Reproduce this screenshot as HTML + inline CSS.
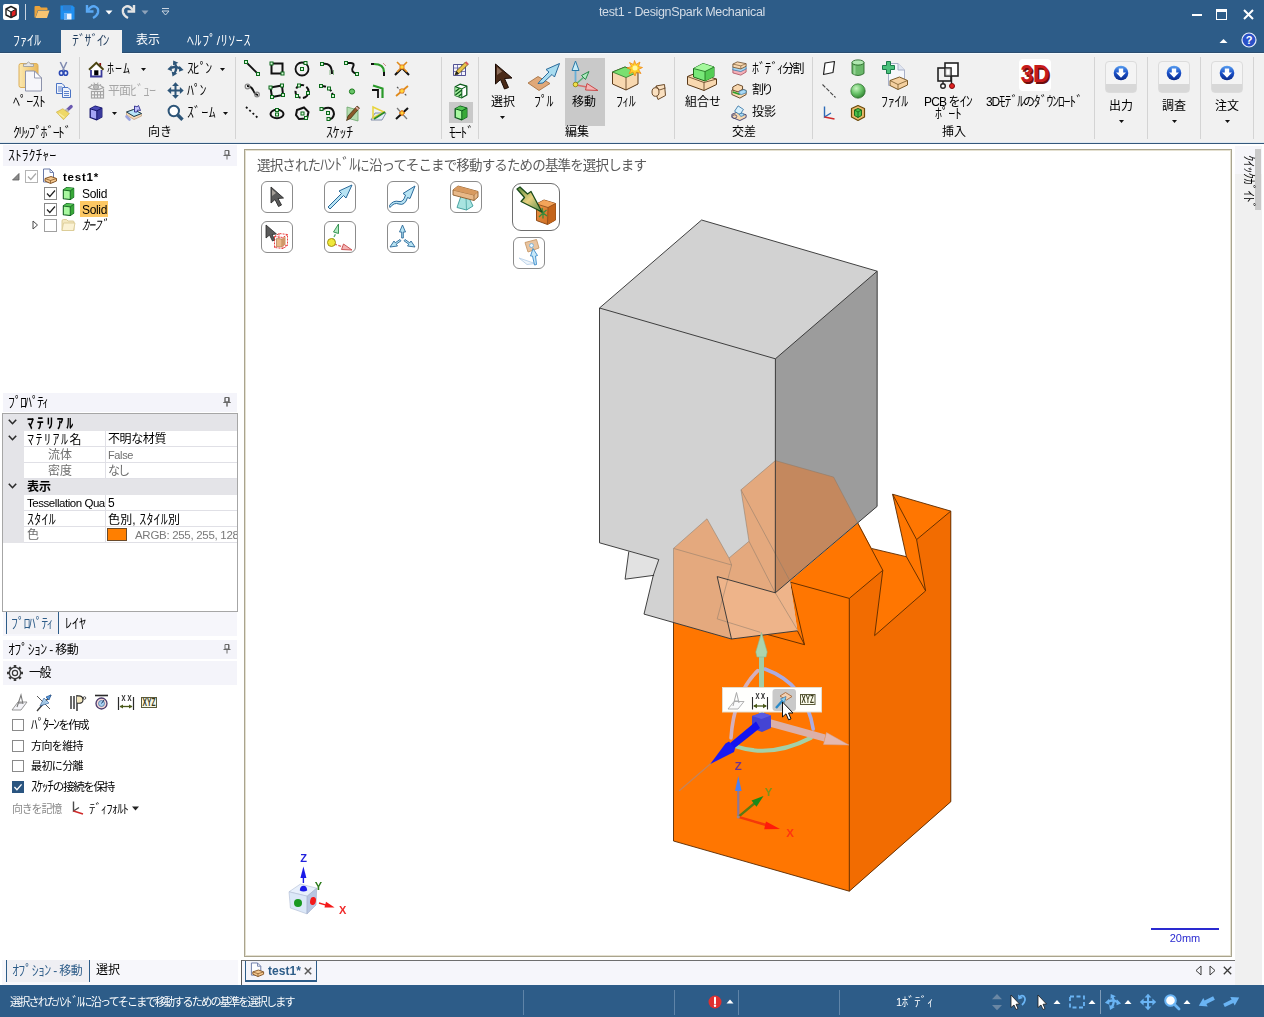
<!DOCTYPE html>
<html lang="ja">
<head>
<meta charset="utf-8">
<title>test1 - DesignSpark Mechanical</title>
<style>
*{box-sizing:border-box;margin:0;padding:0}
html,body{width:1264px;height:1017px;overflow:hidden;background:#f0f0f0}
body{position:relative;font-family:"Liberation Sans","Noto Sans CJK JP",sans-serif;font-size:12px;color:#000;line-height:1}
.a{position:absolute}
.t{position:absolute;white-space:nowrap;line-height:14px;font-size:12px;will-change:transform}
svg{position:absolute;overflow:visible}
.k{font-size:1.167em;font-weight:350}
[style*="font-weight:bold"] .k{font-weight:bold}
#titlebar{left:0;top:0;width:1264px;height:53px;background:#2d5c88}
#ribbon{left:0;top:53px;width:1264px;height:90px;background:#f1f1f1}
#ribline{left:0;top:142px;width:1264px;height:2px;background:linear-gradient(#dfe8f0 0,#dfe8f0 50%,#34587c 50%,#34587c 100%)}
.sep{position:absolute;top:57px;width:1px;height:82px;background:#d4d4d4}
.gl{position:absolute;top:125px;font-size:12px;line-height:14px;white-space:nowrap;will-change:transform}
.hdr{position:absolute;left:3px;width:234px;height:20px;background:#f4f4fa}
.cb{position:absolute;width:13px;height:13px;border:1px solid #8a8a8a;background:#fff}
.vbtn{position:absolute;width:32px;height:32px;border:1px solid #8c8c8c;border-radius:6px;background:#fff}
</style>
</head>
<body>
<!-- TITLE BAR -->
<div id="titlebar" class="a"></div>
<div class="t" style="letter-spacing:-0.35px;left:599px;top:5px;color:#d3dce6;font-size:12.5px">test1 - DesignSpark Mechanical</div>
<!-- title icons -->
<div class="a" style="left:3px;top:4px;width:16px;height:16px;background:#fff;border-radius:2px"></div>
<svg style="left:3px;top:4px;width:16px;height:16px" viewBox="0 0 16 16"><path d="M8 2.5 L13 5 L13 11 L8 13.5 L3 11 L3 5 Z" fill="#fff" stroke="#222" stroke-width="1.4" stroke-linejoin="round"/><path d="M8 8 L13 5 L13 11 L8 13.5 Z" fill="#e02020" stroke="#222" stroke-width="1"/><path d="M3 5 L8 8 L8 13.5" fill="none" stroke="#222" stroke-width="1.2"/></svg>
<div class="a" style="left:25px;top:4px;width:1px;height:16px;background:#c9d4e0"></div>
<svg style="left:34px;top:5px;width:16px;height:14px" viewBox="0 0 16 14"><path d="M0.5 2 Q0.5 1 1.5 1 L5.5 1 L7 2.5 L12.5 2.5 Q13.5 2.5 13.5 3.5 L13.5 5 L4 5 L1.5 12.5 L0.5 12.5 Z" fill="#e9a23b"/><path d="M4.2 5.5 L15.5 5.5 L13 13 L1.5 13 Z" fill="#f8c471"/></svg>
<svg style="left:60px;top:5px;width:15px;height:15px" viewBox="0 0 15 15"><path d="M0.5 0.5 L12.5 0.5 L14.5 2.5 L14.5 14.5 L0.5 14.5 Z" fill="#1f8ff0"/><rect x="3" y="0.5" width="8" height="5" fill="#2f7fd0"/><rect x="4" y="8.5" width="7.5" height="6" fill="#eaf3ff"/><rect x="4" y="8.5" width="3" height="6" fill="#6ab0f5"/></svg>
<svg style="left:85px;top:4px;width:16px;height:15px" viewBox="0 0 16 15"><path d="M2 1 L2 7.5 L8.5 7.5" fill="none" stroke="#5aa9f5" stroke-width="2.4" stroke-linejoin="miter"/><path d="M3 6.5 Q6 1.5 10 2.5 Q14 4 13 8.5 Q12 12 8 14" fill="none" stroke="#5aa9f5" stroke-width="2.4"/></svg>
<svg style="left:105px;top:10px;width:8px;height:5px" viewBox="0 0 8 5"><path d="M0.5 0.5 L7.5 0.5 L4 4.5 Z" fill="#fff"/></svg>
<svg style="left:120px;top:4px;width:16px;height:15px" viewBox="0 0 16 15"><path d="M14 1 L14 7.5 L7.5 7.5" fill="none" stroke="#e4e4e4" stroke-width="2.4"/><path d="M13 6.5 Q10 1.5 6 2.5 Q2 4 3 8.5 Q4 12 8 14" fill="none" stroke="#e4e4e4" stroke-width="2.4"/></svg>
<svg style="left:141px;top:10px;width:8px;height:5px" viewBox="0 0 8 5"><path d="M0.5 0.5 L7.5 0.5 L4 4.5 Z" fill="#8fa3ba"/></svg>
<svg style="left:161px;top:7px;width:9px;height:9px" viewBox="0 0 9 9"><path d="M1 1.5 L8 1.5" stroke="#c9d4e0" stroke-width="1"/><path d="M1 4 L8 4 L4.5 8 Z" fill="none" stroke="#c9d4e0" stroke-width="1"/></svg>
<!-- window controls -->
<div class="a" style="left:1192px;top:14px;width:10px;height:2px;background:#fff"></div>
<div class="a" style="left:1216px;top:9px;width:11px;height:11px;border:1px solid #fff;border-top-width:3px"></div>
<svg style="left:1243px;top:9px;width:11px;height:11px" viewBox="0 0 11 11"><path d="M1 1 L10 10 M10 1 L1 10" stroke="#fff" stroke-width="2"/></svg>
<svg style="left:1219px;top:38px;width:9px;height:6px" viewBox="0 0 9 6"><path d="M0.5 5 L4.5 1 L8.5 5 Z" fill="#fff"/></svg>
<svg style="left:1241px;top:32px;width:16px;height:16px" viewBox="0 0 16 16"><circle cx="8" cy="8" r="7" fill="#2a50c8" stroke="#e8eefc" stroke-width="1.2"/><text x="8" y="12" font-family="Liberation Sans" font-weight="bold" font-size="11" fill="#fff" text-anchor="middle">?</text></svg>
<!-- TABS -->
<div class="a" style="left:61px;top:30px;width:61px;height:23px;background:#f1f1f1"></div>
<div class="t" style="letter-spacing:-0.00px;left:13px;top:33px;color:#fff"><span class="k">ﾌｧｲﾙ</span></div>
<div class="t" style="letter-spacing:-1.50px;left:72px;top:33px;color:#1e3a5a"><span class="k">ﾃﾞｻﾞｲﾝ</span></div>
<div class="t" style="left:136px;top:33px;color:#fff">表示</div>
<div class="t" style="letter-spacing:0.58px;left:187px;top:33px;color:#fff"><span class="k">ﾍﾙﾌﾟ</span>/<span class="k">ﾘｿｰｽ</span></div>
<!-- RIBBON -->
<div id="ribbon" class="a"></div>
<div class="a" style="left:0;top:52px;width:1264px;height:1px;background:#2b4d70"></div>
<div class="a" style="left:0;top:53px;width:1264px;height:1px;background:#f4fbff"></div>
<div class="a" style="left:61px;top:52px;width:61px;height:2px;background:#f1f1f1"></div>
<div id="ribline" class="a"></div>
<!-- ===== clipboard group ===== -->
<svg style="left:17px;top:59px;width:28px;height:34px" viewBox="0 0 28 34">
<defs><linearGradient id="pg" x1="0" y1="0" x2="1" y2="0"><stop offset="0" stop-color="#fbe8b0"/><stop offset="0.45" stop-color="#f5d488"/><stop offset="1" stop-color="#e9b85a"/></linearGradient></defs>
<rect x="2" y="4.500" width="19" height="24" rx="2" fill="url(#pg)" stroke="#dcae58" stroke-width="1"/>
<path d="M6.500 7.500 L6.500 5 L9.500 5 Q11.500 1 13.500 5 L16.500 5 L16.500 7.500 Z" fill="#e6e6e6" stroke="#a0a0a0" stroke-width="0.900"/>
<path d="M8.500 12 L17.500 12 L24.500 19 L24.500 32 L8.500 32 Z" fill="#f6f6fa" stroke="#8d93ab" stroke-width="1"/>
<path d="M17.500 12 L17.500 19 L24.500 19 Z" fill="#fdfdff" stroke="#8d93ab" stroke-width="0.900"/>
</svg>
<div class="t" style="letter-spacing:-0.75px;left:13px;top:94px"><span class="k">ﾍﾟｰｽﾄ</span></div>
<svg style="left:57px;top:61px;width:13px;height:16px" viewBox="0 0 13 16"><path d="M3.300 1 L7.800 10.500 M9.700 1 L5.200 10.500" stroke="#7f8ab0" stroke-width="1.500"/><ellipse cx="4.300" cy="12" rx="1.900" ry="2.300" fill="#e8ecfa" stroke="#2a48b4" stroke-width="1.600"/><ellipse cx="8.700" cy="12" rx="1.900" ry="2.300" fill="#e8ecfa" stroke="#2a48b4" stroke-width="1.600"/></svg>
<svg style="left:56px;top:83px;width:16px;height:15px" viewBox="0 0 16 15"><path d="M0.5 0.5 L6 0.5 L8.5 3 L8.5 10.5 L0.5 10.5 Z" fill="#eef3fc" stroke="#4c74c4" stroke-width="1"/><path d="M6.5 4.5 L12 4.5 L14.5 7 L14.5 14.5 L6.5 14.5 Z" fill="#eef3fc" stroke="#4c74c4" stroke-width="1"/><path d="M8 8.5 L13 8.5 M8 10.5 L13 10.5 M8 12.5 L13 12.5 M2 4 L6 4 M2 6 L6 6 M2 8 L6 8" stroke="#4c74c4" stroke-width="0.9"/></svg>
<svg style="left:56px;top:105px;width:17px;height:16px" viewBox="0 0 17 16"><path d="M15.200 1.500 L11.300 5.100" stroke="#6a58b0" stroke-width="3.200" stroke-linecap="round"/><path d="M11.800 4.600 L9.300 7" stroke="#b8b8c0" stroke-width="3.600"/><path d="M0.300 7.100 L6.800 3.700 L13.400 8.500 L7.500 14.700 Z" fill="#efd866" stroke="#c0a030" stroke-width="0.500"/><path d="M3 8.500 L8.500 12.500" stroke="#f8eca0" stroke-width="1.500"/></svg>
<div class="gl" style="letter-spacing:-1.86px;left:13px"><span class="k">ｸﾘｯﾌﾟﾎﾞｰﾄﾞ</span></div>
<div class="sep" style="left:79px"></div>
<!-- ===== orientation group ===== -->
<svg style="left:88px;top:61px;width:16px;height:17px" viewBox="0 0 16 17"><path d="M3 9 L3 15.500 L13.500 15.500 L13.500 9" fill="#fff" stroke="#3a3a9a" stroke-width="1.800"/><path d="M3 9 L8.300 4 L13.500 9 Z" fill="#fff"/><rect x="11.300" y="2" width="1.800" height="4" fill="#8a1010"/><path d="M1 8.800 L8.300 1.800 L15.500 8.800" fill="none" stroke="#4a4410" stroke-width="1.900"/><rect x="6.200" y="9.300" width="4.200" height="5" fill="#000"/></svg>
<div class="t" style="letter-spacing:1.00px;left:107px;top:61px"><span class="k">ﾎｰﾑ</span></div>
<svg style="left:141px;top:68px;width:5px;height:3px" viewBox="0 0 7 4"><path d="M0 0 L7 0 L3.5 4 Z" fill="#111"/></svg>
<svg style="left:88px;top:82px;width:17px;height:17px" viewBox="0 0 17 17"><path d="M0.500 5.500 Q8 -0.500 15.500 5.500 Q8 10 0.500 5.500 Z" fill="#f4f4f4" stroke="#a4a4a4" stroke-width="1.100"/><circle cx="8" cy="5" r="2.600" fill="#bcbcbc" stroke="#9a9a9a" stroke-width="0.800"/><path d="M3 2 L4 3.200 M6 0.500 L6.500 2 M10 0.500 L9.500 2 M13 2 L12 3.200" stroke="#a4a4a4" stroke-width="0.900"/><rect x="3.500" y="9.500" width="12" height="6.500" fill="#f8f8f8" stroke="#a4a4a4" stroke-width="1.200"/><path d="M3.500 12.800 L15.500 12.800 M6.500 9.500 L6.500 16 M9.500 9.500 L9.500 16 M12.500 9.500 L12.500 16" stroke="#a4a4a4" stroke-width="1.200"/><path d="M15.500 6.500 L15.500 9.500" stroke="#a4a4a4" stroke-width="1.200"/></svg>
<div class="t" style="letter-spacing:-1.00px;left:108px;top:83px;color:#a6a6a6">平面<span class="k">ﾋﾞｭｰ</span></div>
<svg style="left:89px;top:105px;width:14px;height:16px" viewBox="0 0 14 16"><path d="M1.200 3.800 L6 1.200 L12.800 3.200 L12.800 12 L7.800 14.800 L1.200 12.500 Z" fill="#a4a4f4" stroke="#14146a" stroke-width="1.300" stroke-linejoin="round"/><path d="M1.200 3.800 L6 1.200 L12.800 3.200 L7.800 5.800 Z" fill="#4a4ab4"/><path d="M7.800 5.800 L12.800 3.200 L12.800 12 L7.800 14.800 Z" fill="#3a3a9c"/><path d="M1.200 3.800 L7.800 5.800 L12.800 3.200 M7.800 5.800 L7.800 14.800" fill="none" stroke="#14146a" stroke-width="1"/></svg>
<svg style="left:112px;top:112px;width:5px;height:3px" viewBox="0 0 7 4"><path d="M0 0 L7 0 L3.5 4 Z" fill="#111"/></svg>
<svg style="left:125px;top:104px;width:18px;height:17px" viewBox="0 0 18 17"><path d="M1.500 8 L8.500 5.500 L16.500 9.500 L16.500 12 L9 15.500 L1.500 11 Z" fill="#f4d8b8" stroke="#b89878" stroke-width="0.700"/><path d="M1.500 8 L8.500 5.500 L16.500 9.500 L9 12.500 Z" fill="#b8e4f8" stroke="#1a3a4a" stroke-width="1"/><path d="M9.500 2 L12 2.800 L13.500 1.500 L15.500 6.500 L12.500 6 L12 8 L9.500 8 Z" fill="#c4c4fc" stroke="#2a2a8a" stroke-width="0.900"/><path d="M1.500 12.500 L4.500 15.500" stroke="#9aa4e0" stroke-width="2.600" stroke-linecap="round"/></svg>
<!-- spin pan zoom -->
<svg style="left:167px;top:60px;width:17px;height:17px" viewBox="0 0 17 17"><g fill="#2d5578" stroke="none"><path d="M0.400 9.300 L4.600 5.200 L4.900 11.200 Z"/><path d="M16.600 10 L12.300 5.800 L12 11.800 Z"/><path d="M6.200 0.600 L11.400 2.700 L6 5.200 Z"/><path d="M5.500 16.500 L4.700 11.600 L10.300 13.400 Z"/></g><path d="M4 8 Q8.500 5.800 13 8.600" fill="none" stroke="#2d5578" stroke-width="2.300"/><path d="M8 3.500 Q10.800 8.500 7.300 13.500" fill="none" stroke="#2d5578" stroke-width="2.300"/></svg>
<div class="t" style="letter-spacing:-1.33px;left:187px;top:61px"><span class="k">ｽﾋﾟﾝ</span></div>
<svg style="left:220px;top:68px;width:5px;height:3px" viewBox="0 0 7 4"><path d="M0 0 L7 0 L3.5 4 Z" fill="#111"/></svg>
<svg style="left:167px;top:82px;width:17px;height:17px" viewBox="0 0 17 17"><path d="M8.500 3 L8.500 14 M3 8.500 L14 8.500" stroke="#2d5578" stroke-width="2"/><g fill="#2d5578"><path d="M8.500 0.300 L11.900 4.100 L5.100 4.100 Z"/><path d="M8.500 16.700 L11.900 12.900 L5.100 12.900 Z"/><path d="M0.300 8.500 L4.100 5.100 L4.100 11.900 Z"/><path d="M16.700 8.500 L12.900 5.100 L12.900 11.900 Z"/></g></svg>
<div class="t" style="letter-spacing:-1.51px;left:187px;top:83px"><span class="k">ﾊﾟﾝ</span></div>
<svg style="left:167px;top:104px;width:18px;height:18px" viewBox="0 0 18 18"><circle cx="6.800" cy="7" r="5.200" fill="#fff" stroke="#2d5578" stroke-width="2"/><path d="M10.800 11 L15.500 15.700" stroke="#2d5578" stroke-width="3.400"/></svg>
<div class="t" style="letter-spacing:0.33px;left:187px;top:105px"><span class="k">ｽﾞｰﾑ</span></div>
<svg style="left:223px;top:112px;width:5px;height:3px" viewBox="0 0 7 4"><path d="M0 0 L7 0 L3.5 4 Z" fill="#111"/></svg>
<div class="gl" style="left:148px;width:22px">向き</div>
<div class="sep" style="left:235px"></div>
<!-- ===== sketch group ===== -->
<svg style="left:243px;top:58px;width:170px;height:66px" viewBox="243 58 170 66">
<defs><g id="nd"><rect x="-1.5" y="-1.5" width="3" height="3" fill="#d8f4d8" stroke="#0a6a1a" stroke-width="1"/></g></defs>
<!-- row1 -->
<path d="M246 62 L258 74" stroke="#111" stroke-width="1.8"/><use href="#nd" x="246" y="62"/><use href="#nd" x="258" y="74"/>
<path d="M271.500 63.500 L282.500 63.500 L282.500 73.500 L271.500 73.500 Z" fill="none" stroke="#111" stroke-width="2"/><use href="#nd" x="271.500" y="63.500"/><use href="#nd" x="282.500" y="73.500"/>
<circle cx="302" cy="69" r="6.500" fill="none" stroke="#111" stroke-width="1.8"/><use href="#nd" x="302" y="69"/><use href="#nd" x="305.500" y="63"/>
<path d="M322 64 Q332 62 332 74" fill="none" stroke="#111" stroke-width="2"/><path d="M330 70 L330 75 M333.500 70 L333.500 75" stroke="#8ab88a" stroke-width="1"/><use href="#nd" x="322" y="64"/>
<path d="M346 63 L351 63 Q355 63 353 67 Q350 72 357 74" fill="none" stroke="#111" stroke-width="2"/><use href="#nd" x="346" y="63"/><use href="#nd" x="357" y="74"/>
<path d="M371 64 L374 64" stroke="#111" stroke-width="2"/><path d="M374 64 Q384 64 384 72" fill="none" stroke="#2a9a2a" stroke-width="2.2"/><path d="M384 72 L384 76" stroke="#111" stroke-width="2"/><path d="M383 63 L386 66" stroke="#d08a8a" stroke-width="1"/>
<path d="M395 75 L402 68 L409 75" fill="none" stroke="#111" stroke-width="2"/><path d="M397 62 L407 72 M407 62 L397 72" stroke="#e08a1a" stroke-width="1.6"/><circle cx="402" cy="67" r="2.200" fill="#ffd83a" stroke="#e06a1a" stroke-width="0.8"/>
<!-- row2 -->
<path d="M247 86 Q251 86 253 90 Q255 95 258 95" fill="none" stroke="#111" stroke-width="2"/><circle cx="247.500" cy="86.500" r="2.300" fill="none" stroke="#8a8a8a" stroke-width="1.3"/><circle cx="257" cy="94.500" r="2.300" fill="none" stroke="#8a8a8a" stroke-width="1.3"/>
<path d="M270.500 87.500 L282 85.500 L283 95 L272 97 Z" fill="none" stroke="#111" stroke-width="2"/><use href="#nd" x="270.500" y="87.500"/><use href="#nd" x="282" y="85.500"/><use href="#nd" x="283" y="95"/><use href="#nd" x="272" y="97"/>
<circle cx="302" cy="91.500" r="6.500" fill="none" stroke="#111" stroke-width="2" stroke-dasharray="9 2.500"/><use href="#nd" x="299" y="85.500"/><use href="#nd" x="308" y="93"/><use href="#nd" x="297" y="96"/>
<path d="M321 86 Q331 86 333 96" fill="none" stroke="#111" stroke-width="2" stroke-dasharray="5 2"/><use href="#nd" x="321" y="86"/><use href="#nd" x="329" y="88.500"/><use href="#nd" x="333" y="96"/>
<circle cx="352" cy="91.500" r="2.600" fill="#6ac46a" stroke="#1a7a1a" stroke-width="1"/>
<path d="M372 90 L378 90 L378 98" fill="none" stroke="#111" stroke-width="1.8"/><path d="M373 85.500 L382.500 88.500 L382.500 98" fill="none" stroke="#2a9a2a" stroke-width="2.200"/>
<path d="M396 96 L408 86" stroke="#e08a1a" stroke-width="1.8"/><path d="M397 87 L407 96" stroke="#555" stroke-width="1.2" stroke-dasharray="2 1.500"/><circle cx="402" cy="91" r="2.300" fill="#ffd83a" stroke="#e06a1a" stroke-width="0.8"/>
<!-- row3 -->
<path d="M246 107 L259 119" stroke="#111" stroke-width="1.8" stroke-dasharray="2 2.500"/>
<ellipse cx="277" cy="114" rx="6.500" ry="4.300" fill="none" stroke="#111" stroke-width="2"/><use href="#nd" x="277" y="110"/><use href="#nd" x="277" y="114.500"/>
<path d="M297 110 L304 107.500 L308.500 112 L307 118.500 L299 119 L296 115 Z" fill="none" stroke="#111" stroke-width="2"/><use href="#nd" x="302.500" y="113.500"/><use href="#nd" x="306" y="118"/>
<path d="M323 109 Q333 105 334 114 Q333 120 328 119" fill="none" stroke="#111" stroke-width="2"/><use href="#nd" x="321.500" y="109"/><use href="#nd" x="328" y="113"/><use href="#nd" x="328.500" y="119"/>
<path d="M347 107 L358 110 L358 121 L347 118 Z" fill="#b4dcb0" stroke="#6aa46a" stroke-width="0.8"/><path d="M346.500 120.500 L348 116 L357 106 L359.500 108 L350.500 118.500 Z" fill="#8a5a2a" stroke="#3a2a0a" stroke-width="0.7"/><path d="M356 107 L358.500 109.500" stroke="#e8b0b0" stroke-width="1.5"/>
<path d="M371 120 L375 113 L386 113 L382 120 Z" fill="#e4ecf8" stroke="#6a7a9a" stroke-width="0.8"/><path d="M373 107 L373 118 L384 112 Z" fill="none" stroke="#e8d43a" stroke-width="1.5"/><path d="M374 119 L385 112" stroke="#2a8a2a" stroke-width="1.8"/>
<path d="M396 119 L408 108" stroke="#111" stroke-width="2"/><path d="M397 108 L407 119" stroke="#777" stroke-width="1.2"/><path d="M399 113 L405 113 M402 110 L402 116" stroke="#e08a1a" stroke-width="1.4"/><circle cx="402" cy="113" r="2" fill="#ffd83a" stroke="#e06a1a" stroke-width="0.8"/>
</svg>
<div class="gl" style="letter-spacing:-0.25px;left:326px"><span class="k">ｽｹｯﾁ</span></div>
<div class="sep" style="left:441px"></div>
<!-- ===== mode group ===== -->
<div class="a" style="left:449px;top:102px;width:24px;height:21px;background:#c9c9c9"></div>
<svg style="left:452px;top:60px;width:18px;height:18px" viewBox="0 0 18 18"><path d="M1.500 4.500 L13.500 4.500 L13.500 15.500 L1.500 15.500 Z" fill="#f4f4fc" stroke="#2a2a7a" stroke-width="0.8"/><path d="M1.500 8 L13.500 8 M1.500 11.500 L13.500 11.500 M5.500 4.500 L5.500 15.500 M9.500 4.500 L9.500 15.500" stroke="#4a4a9a" stroke-width="0.7"/><path d="M3 15 L4.500 11 L13.500 2 L16 4.500 L7 13.500 Z" fill="#e8c44a" stroke="#5a4a0a" stroke-width="0.8"/><path d="M13.500 2 L16 4.500" stroke="#d85a5a" stroke-width="2"/><path d="M3 15 L4.500 11 L7 13.500 Z" fill="#222"/></svg>
<svg style="left:454px;top:83px;width:14px;height:16px" viewBox="0 0 14 16"><path d="M1.200 3.800 L6 1.200 L12.800 3.200 L12.800 12 L7.800 14.800 L1.200 12.500 Z" fill="#fff" stroke="#0a5a1a" stroke-width="1.300" stroke-linejoin="round"/><path d="M1.200 3.800 L7.800 5.800 L7.800 14.800 L1.200 12.500 Z" fill="#a8f0a0"/><path d="M1.500 8.500 L5.500 5.200 M1.500 12 L7.800 7 M4.500 13.500 L7.800 10.800" stroke="#0a5a1a" stroke-width="1.300"/><path d="M1.200 3.800 L7.800 5.800 L12.800 3.200 M7.800 5.800 L7.800 14.800" fill="none" stroke="#0a5a1a" stroke-width="1"/></svg>
<svg style="left:454px;top:105px;width:14px;height:16px" viewBox="0 0 14 16"><path d="M1.200 3.800 L6 1.200 L12.800 3.200 L12.800 12 L7.800 14.800 L1.200 12.500 Z" fill="#a8f8a0" stroke="#0a5a1a" stroke-width="1.300" stroke-linejoin="round"/><path d="M1.200 3.800 L6 1.200 L12.800 3.200 L7.800 5.800 Z" fill="#52c452"/><path d="M7.800 5.800 L12.800 3.200 L12.800 12 L7.800 14.800 Z" fill="#38a838"/><path d="M1.200 3.800 L7.800 5.800 L12.800 3.200 M7.800 5.800 L7.800 14.800" fill="none" stroke="#0a5a1a" stroke-width="1"/></svg>
<div class="gl" style="letter-spacing:-1.33px;left:449px"><span class="k">ﾓｰﾄﾞ</span></div>
<div class="sep" style="left:478px"></div>
<!-- ===== edit group ===== -->
<svg style="left:494px;top:63px;width:20px;height:28px" viewBox="0 0 20 28"><path d="M1.500 1 L1.500 21 L6.500 16.500 L10.500 26 L14.500 24.500 L10.500 15.500 L18 15 Z" fill="#4a2a18" stroke="#1a0a04" stroke-width="1" stroke-linejoin="round"/><path d="M3 4 L3 12 L8 8.500 Z" fill="#a88a78" opacity="0.7"/></svg>
<div class="t" style="left:491px;top:95px;width:24px">選択</div>
<svg style="left:500px;top:116px;width:5px;height:3px" viewBox="0 0 7 4"><path d="M0 0 L7 0 L3.500 4 Z" fill="#111"/></svg>
<svg style="left:527px;top:62px;width:34px;height:30px" viewBox="0 0 34 30"><path d="M1 21 L11 14.500 L23 21.500 L12 28.500 Z" fill="#e0a878" stroke="#a06a3a" stroke-width="0.8"/><path d="M11 21.500 L13.500 18.500 L22 10 L19 7.500 L32.500 1.500 L27.500 15 L25 12.500 L16 21 Z" fill="#a8dcf0" stroke="#2a6a9a" stroke-width="1" stroke-linejoin="round"/></svg>
<div class="t" style="letter-spacing:-1.51px;left:534px;top:94px"><span class="k">ﾌﾟﾙ</span></div>
<div class="a" style="left:565px;top:58px;width:40px;height:68px;background:#c9c9c9"></div>
<svg style="left:570px;top:60px;width:30px;height:34px" viewBox="0 0 30 34"><path d="M5.500 24 L5.500 9" stroke="#6ab0d8" stroke-width="1.800"/><path d="M5.500 1 L2 10.500 L9 10.500 Z" fill="#c8ecf8" stroke="#2a7aa8" stroke-width="1"/><path d="M6 24 L14 17" stroke="#5ab07a" stroke-width="1.600"/><path d="M19 11.500 L11.500 15.500 L15.500 19.500 Z" fill="#b0eac0" stroke="#2a8a4a" stroke-width="1"/><path d="M6 25 L17 27" stroke="#d86a6a" stroke-width="1.600"/><path d="M28 30.500 L17 23.500 L15.500 30 Z" fill="#f4b4b4" stroke="#c84a4a" stroke-width="1"/><circle cx="5.500" cy="24.500" r="2.300" fill="#f0e04a" stroke="#8a7a0a" stroke-width="0.800"/></svg>
<div class="t" style="left:572px;top:95px;width:24px">移動</div>
<svg style="left:611px;top:60px;width:32px;height:32px" viewBox="0 0 32 32"><path d="M1.500 12 L14 7 L27 12 L27 24 L15 30 L1.500 24 Z" fill="#f8d8b0" stroke="#5a3a1a" stroke-width="1" stroke-linejoin="round"/><path d="M1.500 12 L14 7 L27 12 L15 17.500 Z" fill="#7ae070" stroke="#2a7a2a" stroke-width="0.800"/><path d="M15 17.500 L15 30" stroke="#5a3a1a" stroke-width="0.800"/><path d="M23.500 0.500 L25 4.500 L29 2 L27.500 6.500 L31.500 7.500 L27.500 9.500 L30 13.500 L25.500 12 L24 16 L22 12 L18 14 L20 9.500 L16 8 L20.500 6.500 L18.500 2.500 L22.500 4.500 Z" fill="#ffd02a" stroke="#f08a1a" stroke-width="0.800"/><circle cx="24" cy="8" r="2.500" fill="#fff8a0"/></svg>
<div class="t" style="letter-spacing:-0.67px;left:616px;top:94px"><span class="k">ﾌｨﾙ</span></div>
<svg style="left:651px;top:83px;width:16px;height:18px" viewBox="0 0 16 18"><path d="M5 3 L13.500 1.500 L14.500 12.500 L7 16.500 L5 11 Z" fill="#fae0c0" stroke="#6a4a2a" stroke-width="1" stroke-linejoin="round"/><path d="M5 3 L8.500 7 L14.500 5" fill="none" stroke="#6a4a2a" stroke-width="0.900"/><ellipse cx="4.500" cy="9" rx="3.500" ry="4.300" fill="#fae0c0" stroke="#6a4a2a" stroke-width="1"/></svg>
<div class="gl" style="left:565px">編集</div>
<div class="sep" style="left:674px"></div>
<!-- ===== intersect group ===== -->
<svg style="left:686px;top:62px;width:32px;height:30px" viewBox="0 0 32 30"><path d="M1.500 14.500 L10 11 L30.500 17 L30.500 22.500 L18 28.500 L1.500 22.500 Z" fill="#f8d8b0" stroke="#5a3a1a" stroke-width="1" stroke-linejoin="round"/><path d="M1.500 14.500 L18 20.500 L30.500 17 M18 20.500 L18 28.500" fill="none" stroke="#5a3a1a" stroke-width="0.800"/><path d="M7.500 6.500 L17 1.500 L28 5 L28 14.500 L19 19 L7.500 15 Z" fill="#78e878" stroke="#1a6a1a" stroke-width="1" stroke-linejoin="round"/><path d="M7.500 6.500 L17 1.500 L28 5 L19 9.500 Z" fill="#a4f89c"/><path d="M19 9.500 L28 5 L28 14.500 L19 19 Z" fill="#54cc54"/><path d="M7.500 6.500 L19 9.500 L28 5 M19 9.500 L19 19" fill="none" stroke="#1a6a1a" stroke-width="0.800"/></svg>
<div class="t" style="left:685px;top:95px;width:36px">組合せ</div>
<svg style="left:732px;top:61px;width:15px;height:15px" viewBox="0 0 17 17"><path d="M1 9 L6 6.500 L16 8.500 L16 12.500 L10 16 L1 13.500 Z" fill="#f4b0b8" stroke="#a84a5a" stroke-width="0.900"/><path d="M1 6.500 L6 4 L16 6 L16 9 L10 12 L1 10 Z" fill="#a8d8f4" stroke="#3a78a8" stroke-width="0.900"/><path d="M1 3.500 L6 1 L16 3 L16 6 L10 9 L1 7 Z" fill="#f8d8b0" stroke="#6a4a2a" stroke-width="0.900"/><path d="M1 3.500 L10 5.500 L16 3 M10 5.500 L10 9" fill="none" stroke="#6a4a2a" stroke-width="0.700"/></svg>
<div class="t" style="letter-spacing:-1.60px;left:752px;top:61px"><span class="k">ﾎﾞﾃﾞｨ</span>分割</div>
<svg style="left:731px;top:83px;width:16px;height:16px" viewBox="0 0 18 18"><path d="M1 8 L7 5 L17 8.500 L17 13 L10 17 L1 13 Z" fill="#f8d8b0" stroke="#5a3a1a" stroke-width="1" stroke-linejoin="round"/><path d="M2 4.500 L7.500 1.500 L13 3.500 L13 7 L8 10 L2 8 Z" fill="#f8d8b0" stroke="#5a3a1a" stroke-width="1"/><path d="M2 10 L9 12.500 L17 9" fill="none" stroke="#2aa02a" stroke-width="1.800"/><path d="M9 9.500 L14 7.500 L17 8.500 L17 11 L12 13 L9 12 Z" fill="#a8d8f4" stroke="#3a78a8" stroke-width="0.800"/></svg>
<div class="t" style="letter-spacing:-2.51px;left:752px;top:83px">割り</div>
<svg style="left:731px;top:105px;width:16px;height:16px" viewBox="0 0 18 18"><path d="M1 10.500 L7 8 L17 11 L17 14 L10 17.500 L1 14 Z" fill="#f8d8b0" stroke="#3a3a6a" stroke-width="1" stroke-linejoin="round"/><path d="M8 1 L14 5 L10 11 L4 7 Z" fill="#d8f0fc" stroke="#3a78a8" stroke-width="1"/><path d="M9 10 L13 9 L15 11.500 L11 13 Z" fill="#a8d8f4" stroke="#3a78a8" stroke-width="0.800"/><ellipse cx="4" cy="13" rx="2.500" ry="2" fill="#f8d8b0" stroke="#3a3a6a" stroke-width="0.900"/></svg>
<div class="t" style="left:752px;top:105px">投影</div>
<div class="gl" style="left:732px">交差</div>
<div class="sep" style="left:812px"></div>
<!-- ===== insert group ===== -->
<svg style="left:822px;top:60px;width:14px;height:16px" viewBox="0 0 14 16"><path d="M3 3 L12.500 1.500 L11 12.500 L1.500 14.500 Z" fill="#fff" stroke="#222" stroke-width="1.200" stroke-linejoin="round"/></svg>
<svg style="left:821px;top:83px;width:16px;height:16px" viewBox="0 0 16 16"><path d="M1.500 1.500 L14.500 14.500" stroke="#444" stroke-width="1.100" stroke-dasharray="4 1.500"/></svg>
<svg style="left:822px;top:105px;width:15px;height:16px" viewBox="0 0 15 16"><path d="M2.500 1.500 L2.500 12 L9 8" fill="none" stroke="#2a6ab8" stroke-width="1.400"/><path d="M2.500 12 L12.500 14" stroke="#d02a2a" stroke-width="1.400"/></svg>
<svg style="left:851px;top:59px;width:14px;height:18px" viewBox="0 0 14 18"><path d="M1 3.500 L1 14.500 Q7 18.500 13 14.500 L13 3.500 Z" fill="#6ab86a" stroke="#2a6a2a" stroke-width="0.900"/><ellipse cx="7" cy="3.500" rx="6" ry="2.600" fill="#b0e8b0" stroke="#2a6a2a" stroke-width="0.900"/><path d="M3.500 6.500 L3.500 15.500" stroke="#a8e0a8" stroke-width="2" opacity="0.700"/></svg>
<svg style="left:850px;top:83px;width:16px;height:16px" viewBox="0 0 16 16"><defs><radialGradient id="sg" cx="0.38" cy="0.32" r="0.75"><stop offset="0" stop-color="#c8f4c0"/><stop offset="0.5" stop-color="#6ac46a"/><stop offset="1" stop-color="#2a7a2a"/></radialGradient></defs><circle cx="8" cy="8" r="7.200" fill="url(#sg)" stroke="#2a6a2a" stroke-width="0.700"/></svg>
<svg style="left:850px;top:104px;width:16px;height:18px" viewBox="0 0 16 18"><path d="M1.500 4.500 L8 1.500 L14.500 4.500 L14.500 13 L8 16.500 L1.500 13 Z" fill="#e8b86a" stroke="#6a4a0a" stroke-width="1.200" stroke-linejoin="round"/><path d="M4.500 6 L8 4.500 L11.500 6 L11.500 11.500 L8 13.500 L4.500 11.500 Z" fill="#4ac04a" stroke="#1a6a1a" stroke-width="1"/><path d="M8 8 L8 13.500 M4.500 6 L8 8 L11.500 6" fill="none" stroke="#1a6a1a" stroke-width="0.900"/></svg>
<svg style="left:882px;top:61px;width:27px;height:30px" viewBox="0 0 27 30"><path d="M6.500 2.500 L16 2.500 L22.500 9 L22.500 24.500 L6.500 24.500 Z" fill="#f6f8fc" stroke="#a8b0c8" stroke-width="1"/><path d="M16 2.500 L16 9 L22.500 9" fill="#e0e6f2" stroke="#a8b0c8" stroke-width="1"/><path d="M8 19.500 L17.500 16 L25.500 19.500 L25.500 24 L16 28.500 L8 24.500 Z" fill="#f4d0a0" stroke="#7a5a2a" stroke-width="1" stroke-linejoin="round"/><path d="M8 19.500 L16 23.500 L25.500 19.500 M16 23.500 L16 28.500" fill="none" stroke="#7a5a2a" stroke-width="0.800"/><path d="M4.500 0.500 L8.500 0.500 L8.500 4.500 L12.500 4.500 L12.500 8.500 L8.500 8.500 L8.500 12.500 L4.500 12.500 L4.500 8.500 L0.500 8.500 L0.500 4.500 L4.500 4.500 Z" fill="#4ac07a" stroke="#1a7a4a" stroke-width="1"/></svg>
<div class="t" style="letter-spacing:-0.25px;left:881px;top:94px"><span class="k">ﾌｧｲﾙ</span></div>
<svg style="left:936px;top:61px;width:24px;height:29px" viewBox="0 0 24 29"><rect x="9" y="2" width="13" height="13" fill="#fff" stroke="#222" stroke-width="1.600"/><rect x="2" y="7" width="13" height="13" fill="none" stroke="#222" stroke-width="1.600"/><rect x="9.800" y="7.800" width="4.400" height="6.400" fill="#fff" stroke="#777" stroke-width="0.800"/><path d="M7 20 L7 23 M15.500 15 L15.500 23" stroke="#222" stroke-width="1.400"/><circle cx="7" cy="25" r="2.300" fill="#fff" stroke="#222" stroke-width="1.400"/><circle cx="16" cy="25" r="2.500" fill="#e02020" stroke="#7a0a0a" stroke-width="1"/></svg>
<div class="t" style="letter-spacing:-0.86px;left:924px;top:94px">PCB を<span class="k">ｲﾝ</span></div>
<div class="t" style="letter-spacing:-0.67px;left:935px;top:106px"><span class="k">ﾎﾟｰﾄ</span></div>
<div class="gl" style="left:942px">挿入</div>
<div class="a" style="left:1019px;top:59px;width:32px;height:32px;background:#fff;border-radius:4px"></div>
<svg style="left:1019px;top:59px;width:32px;height:32px" viewBox="0 0 32 32"><text x="17.500" y="24.500" font-family="Liberation Sans" font-weight="bold" font-size="23" fill="#6e0e0e" text-anchor="middle" textLength="29" lengthAdjust="spacingAndGlyphs">3D</text><text x="16" y="23" font-family="Liberation Sans" font-weight="bold" font-size="23" fill="#c81c1c" text-anchor="middle" textLength="29" lengthAdjust="spacingAndGlyphs">3D</text></svg>
<div class="t" style="letter-spacing:-1.28px;left:986px;top:94px">3D<span class="k">ﾓﾃﾞﾙ</span>の<span class="k">ﾀﾞｳﾝﾛｰﾄﾞ</span></div>
<div class="sep" style="left:1094px"></div>
<!-- dropdown groups -->
<div class="a" style="left:1105px;top:61px;width:32px;height:32px;border-radius:4px;background:linear-gradient(#f4f4f4 0,#f4f4f4 72%,#d8d8d8 72%,#d8d8d8 100%);border:1px solid #dcdcdc"></div>
<div class="a" style="left:1158px;top:61px;width:32px;height:32px;border-radius:4px;background:linear-gradient(#f4f4f4 0,#f4f4f4 72%,#d8d8d8 72%,#d8d8d8 100%);border:1px solid #dcdcdc"></div>
<div class="a" style="left:1211px;top:61px;width:32px;height:32px;border-radius:4px;background:linear-gradient(#f4f4f4 0,#f4f4f4 72%,#d8d8d8 72%,#d8d8d8 100%);border:1px solid #dcdcdc"></div>
<svg style="left:1113px;top:65px;width:16px;height:16px" viewBox="0 0 16 16"><defs><linearGradient id="bg1" x1="0" y1="0" x2="0" y2="1"><stop offset="0" stop-color="#5aa0f0"/><stop offset="0.5" stop-color="#1a50c8"/><stop offset="1" stop-color="#0a2a8a"/></linearGradient><g id="dl"><circle cx="8" cy="8" r="7.300" fill="url(#bg1)"/><path d="M5.800 3.500 L10.200 3.500 L10.200 7.500 L13 7.500 L8 12.800 L3 7.500 L5.800 7.500 Z" fill="#fff"/></g></defs><use href="#dl"/></svg>
<svg style="left:1166px;top:65px;width:16px;height:16px" viewBox="0 0 16 16"><use href="#dl"/></svg>
<svg style="left:1219px;top:65px;width:16px;height:16px" viewBox="0 0 16 16"><use href="#dl"/></svg>
<div class="t" style="left:1109px;top:99px;width:24px">出力</div>
<div class="t" style="left:1162px;top:99px;width:24px">調査</div>
<div class="t" style="left:1215px;top:99px;width:24px">注文</div>
<svg style="left:1119px;top:120px;width:5px;height:3px" viewBox="0 0 7 4"><path d="M0 0 L7 0 L3.500 4 Z" fill="#111"/></svg>
<svg style="left:1172px;top:120px;width:5px;height:3px" viewBox="0 0 7 4"><path d="M0 0 L7 0 L3.500 4 Z" fill="#111"/></svg>
<svg style="left:1225px;top:120px;width:5px;height:3px" viewBox="0 0 7 4"><path d="M0 0 L7 0 L3.500 4 Z" fill="#111"/></svg>
<div class="sep" style="left:1147px"></div>
<div class="sep" style="left:1200px"></div>
<div class="sep" style="left:1253px"></div>
<!--RIBBON-CONTENT-->
<!-- LEFT PANELS -->
<div class="a" style="left:0;top:144px;width:1264px;height:841px;background:#fff"></div>
<div class="a" style="left:3px;top:145px;width:234px;height:815px;background:#fff"></div>
<!-- structure header -->
<div class="hdr" style="top:145px;height:21px"></div>
<div class="t" style="letter-spacing:-0.14px;left:8px;top:148px"><span class="k">ｽﾄﾗｸﾁｬｰ</span></div>
<svg id="pin1" style="left:223px;top:150px;width:8px;height:10px" viewBox="0 0 8 10"><path d="M2 0.500 L6 0.500 L6 5 L2 5 Z M0.500 5.500 L7.500 5.500 M4 5.500 L4 9.500" fill="none" stroke="#6a6a6a" stroke-width="1"/><path d="M5.500 0.500 L5.500 5" stroke="#6a6a6a" stroke-width="1"/></svg>
<!-- tree -->
<svg style="left:12px;top:173px;width:8px;height:8px" viewBox="0 0 8 8"><path d="M7 0.500 L7 7 L0.500 7 Z" fill="#8a8a8a" stroke="#5a5a5a" stroke-width="0.800"/></svg>
<div class="cb" style="left:25px;top:170px;border-color:#b4b4b4"></div>
<svg style="left:27px;top:172px;width:10px;height:9px" viewBox="0 0 10 9"><path d="M1 4.500 L3.800 7.500 L9 1.500" fill="none" stroke="#a8a8a8" stroke-width="1.200"/></svg>
<svg style="left:42px;top:168px;width:16px;height:17px" viewBox="0 0 16 17"><path d="M1.500 1 L8 1 L11.500 4.500 L11.500 14 L1.500 14 Z" fill="#fdfdff" stroke="#6a7aa8" stroke-width="1"/><path d="M8 1 L8 4.500 L11.500 4.500" fill="none" stroke="#6a7aa8" stroke-width="0.900"/><path d="M3 10.500 L9 8.500 L14.500 10.500 L14.500 13 L8.500 15.500 L3 13 Z" fill="#f4c890" stroke="#7a4a1a" stroke-width="0.900" stroke-linejoin="round"/><path d="M3 10.500 L8.500 12.500 L14.500 10.500 M8.500 12.500 L8.500 15.500" fill="none" stroke="#7a4a1a" stroke-width="0.700"/></svg>
<div class="t" style="letter-spacing:0.78px;left:63px;top:170px;font-weight:bold;font-size:11.500px">test1*</div>
<div class="cb" style="left:44px;top:187px"></div>
<svg style="left:46px;top:189px;width:10px;height:9px" viewBox="0 0 10 9"><path d="M1 4.500 L3.800 7.500 L9 1.500" fill="none" stroke="#222" stroke-width="1.200"/></svg>
<svg style="left:62px;top:186px;width:13px;height:15px" viewBox="0 0 15 17"><g id="gcube"><path d="M1.500 4.500 L5.500 1.500 L13.500 2.500 L13.500 12.500 L9.500 15.500 L1.500 14.500 Z" fill="#a8f8a0" stroke="#0a5a1a" stroke-width="1.200" stroke-linejoin="round"/><path d="M1.500 4.500 L5.500 1.500 L13.500 2.500 L9.500 5.500 Z" fill="#52c452"/><path d="M9.500 5.500 L13.500 2.500 L13.500 12.500 L9.500 15.500 Z" fill="#38a838"/><path d="M1.500 4.500 L9.500 5.500 L13.500 2.500 M9.500 5.500 L9.500 15.500" fill="none" stroke="#0a5a1a" stroke-width="1"/></g></svg>
<div class="t" style="letter-spacing:-0.34px;left:82px;top:187px">Solid</div>
<div class="a" style="left:80px;top:201px;width:28px;height:16px;background:#fdc864"></div>
<div class="cb" style="left:44px;top:203px"></div>
<svg style="left:46px;top:205px;width:10px;height:9px" viewBox="0 0 10 9"><path d="M1 4.500 L3.800 7.500 L9 1.500" fill="none" stroke="#222" stroke-width="1.200"/></svg>
<svg style="left:62px;top:202px;width:13px;height:15px" viewBox="0 0 15 17"><use href="#gcube"/></svg>
<div class="t" style="letter-spacing:-0.34px;left:82px;top:203px">Solid</div>
<svg style="left:32px;top:220px;width:7px;height:10px" viewBox="0 0 7 10"><path d="M1 1 L5.500 5 L1 9 Z" fill="#fff" stroke="#4a4a4a" stroke-width="1"/></svg>
<div class="cb" style="left:44px;top:219px;border-color:#a0a0a0"></div>
<svg style="left:61px;top:218px;width:15px;height:14px" viewBox="0 0 15 14"><path d="M1 3 Q1 1.500 2.500 1.500 L5.500 1.500 L7 3 L12 3 Q13 3 13 4 L13 12.500 L1 12.500 Z" fill="#f4e8c0" stroke="#d8c890" stroke-width="0.900"/><path d="M2.500 5 L14 5 L12.500 12.500 L1 12.500 Z" fill="#fbf2d4" stroke="#d8c890" stroke-width="0.800"/></svg>
<div class="t" style="letter-spacing:-1.00px;left:82px;top:218px;font-style:italic"><span class="k">ｶｰﾌﾞ</span></div>
<!-- properties header -->
<div class="hdr" style="top:393px;height:19px"></div>
<div class="t" style="letter-spacing:-2.00px;left:8px;top:395px"><span class="k">ﾌﾟﾛﾊﾟﾃｨ</span></div>
<svg style="left:223px;top:397px;width:8px;height:10px" viewBox="0 0 8 10"><use href="#pinp"/><path id="pinp" d="M2 0.500 L6 0.500 L6 5 L2 5 Z M0.500 5.500 L7.500 5.500 M4 5.500 L4 9.500 M5.500 0.500 L5.500 5" fill="none" stroke="#6a6a6a" stroke-width="1"/></svg>
<!-- property grid -->
<div class="a" style="left:2px;top:413px;width:236px;height:199px;border:1px solid #a6a6a6;background:#fff"></div>
<div class="a" style="left:3px;top:414px;width:21px;height:129px;background:#e4e4e8"></div>
<div class="a" style="left:3px;top:414px;width:234px;height:17px;background:#e4e4e8"></div>
<div class="a" style="left:3px;top:478px;width:234px;height:17px;background:#e4e4e8"></div>
<div class="a" style="left:24px;top:446px;width:213px;height:1px;background:#e0e0e6"></div>
<div class="a" style="left:24px;top:462px;width:213px;height:1px;background:#e0e0e6"></div>
<div class="a" style="left:24px;top:478px;width:213px;height:1px;background:#e0e0e6"></div>
<div class="a" style="left:24px;top:510px;width:213px;height:1px;background:#e0e0e6"></div>
<div class="a" style="left:24px;top:526px;width:213px;height:1px;background:#e0e0e6"></div>
<div class="a" style="left:24px;top:542px;width:213px;height:1px;background:#e0e0e6"></div>
<div class="a" style="left:105px;top:431px;width:1px;height:47px;background:#e0e0e6"></div>
<div class="a" style="left:105px;top:495px;width:1px;height:48px;background:#e0e0e6"></div>
<svg style="left:8px;top:419px;width:9px;height:6px" viewBox="0 0 9 6"><path id="chv" d="M0.800 0.800 L4.500 4.700 L8.200 0.800" fill="none" stroke="#2a2a2a" stroke-width="1.600"/></svg>
<svg style="left:8px;top:435px;width:9px;height:6px" viewBox="0 0 9 6"><use href="#chv"/></svg>
<svg style="left:8px;top:483px;width:9px;height:6px" viewBox="0 0 9 6"><use href="#chv"/></svg>
<div class="t" style="letter-spacing:2.80px;left:27px;top:416px;font-weight:bold"><span class="k">ﾏﾃﾘｱﾙ</span></div>
<div class="t" style="letter-spacing:1.50px;left:27px;top:432px"><span class="k">ﾏﾃﾘｱﾙ</span>名</div>
<div class="t" style="letter-spacing:-0.40px;left:108px;top:432px">不明な材質</div>
<div class="t" style="left:48px;top:448px;color:#6e6e6e">流体</div>
<div class="t" style="letter-spacing:-0.38px;left:108px;top:448px;color:#6e6e6e;font-size:11px">False</div>
<div class="t" style="left:48px;top:464px;color:#6e6e6e">密度</div>
<div class="t" style="letter-spacing:-2.01px;left:108px;top:464px;color:#6e6e6e">なし</div>
<div class="t" style="left:27px;top:480px;font-weight:bold">表示</div>
<div class="t" style="left:27px;top:496px;width:78px;overflow:hidden;font-size:11.500px;letter-spacing:-0.45px">Tessellation Quality</div>
<div class="t" style="left:108px;top:496px">5</div>
<div class="t" style="letter-spacing:0.25px;left:27px;top:512px"><span class="k">ｽﾀｲﾙ</span></div>
<div class="t" style="letter-spacing:0.15px;left:108px;top:512px">色別, <span class="k">ｽﾀｲﾙ</span>別</div>
<div class="t" style="left:27px;top:528px;color:#6e6e6e">色</div>
<div class="a" style="left:107px;top:528px;width:20px;height:13px;background:#ff7f00;border:1px solid #6a4a2a"></div>
<div class="t" style="left:135px;top:528px;color:#7a7a7a;width:102px;overflow:hidden;font-size:11.500px;letter-spacing:-0.3px">ARGB: 255, 255, 128, 0</div>
<!-- prop tabs -->
<div class="a" style="left:3px;top:612px;width:234px;height:24px;background:#f6f6fb"></div>
<div class="a" style="left:6px;top:612px;width:53px;height:22px;background:#f2f2f6;border-left:1px solid #2d5c88;border-right:1px solid #2d5c88"></div>
<div class="t" style="letter-spacing:-1.60px;left:11px;top:616px;color:#2d5c88"><span class="k">ﾌﾟﾛﾊﾟﾃｨ</span></div>
<div class="t" style="letter-spacing:-0.00px;left:65px;top:616px"><span class="k">ﾚｲﾔ</span></div>
<!-- options header -->
<div class="hdr" style="top:640px;height:19px"></div>
<div class="t" style="letter-spacing:-0.67px;left:8px;top:642px"><span class="k">ｵﾌﾟｼｮﾝ</span> - 移動</div>
<svg style="left:223px;top:644px;width:8px;height:10px" viewBox="0 0 8 10"><use href="#pinp"/></svg>
<div class="hdr" style="top:661px;height:24px"></div>
<svg style="left:6px;top:664px;width:18px;height:18px" viewBox="0 0 18 18"><circle cx="9" cy="9" r="5.600" fill="none" stroke="#3a3a3a" stroke-width="1.300"/><circle cx="9" cy="9" r="2.600" fill="none" stroke="#3a3a3a" stroke-width="1.200"/><g stroke="#3a3a3a" stroke-width="2.600"><path d="M9 1 L9 3.500 M9 14.500 L9 17 M1 9 L3.500 9 M14.500 9 L17 9 M3.300 3.300 L5.100 5.100 M12.900 12.900 L14.700 14.700 M3.300 14.700 L5.100 12.900 M12.900 5.100 L14.700 3.300"/></g><circle cx="9" cy="9" r="4.300" fill="#f6f6fb"/><circle cx="9" cy="9" r="2.600" fill="none" stroke="#3a3a3a" stroke-width="1.200"/></svg>
<div class="t" style="letter-spacing:-1.51px;left:29px;top:666px;width:22px">一般</div>
<!-- options icons -->
<svg style="left:11px;top:693px;width:150px;height:19px" viewBox="11 693 150 19">
<path d="M12 710 L18 702 L27 702 L21 710 Z" fill="#f4f4f8" stroke="#8a8a8a" stroke-width="0.900"/><path d="M17 707 L21 695 L23 704 M18.500 703 L23 703" fill="none" stroke="#7a7a7a" stroke-width="1.100"/>
<path d="M37 711 L51 695" stroke="#3a3a3a" stroke-width="1.300"/><path d="M37 696 L50 709" stroke="#5a5a5a" stroke-width="1"/><path d="M51 695 L46 697 L49 700 Z" fill="#5a9ad8" stroke="#2a5a9a" stroke-width="0.800"/><path d="M40 706 L44 698 L49 703 Z" fill="#a8d0f0" stroke="#2a5a9a" stroke-width="0.700" opacity="0.900"/>
<path d="M71 696 L71 709 M74 696 L74 709 M77 695 L77 711" stroke="#2a2a2a" stroke-width="1.400"/><path d="M77 696 Q83 695 83 700 Q83 704 77 703" fill="#f4e8c0" stroke="#2a2a2a" stroke-width="1.100"/><circle cx="84.500" cy="698" r="1.300" fill="none" stroke="#2a2a2a" stroke-width="0.800"/>
<path d="M95 695.500 L108 695.500" stroke="#2a2a2a" stroke-width="1.600"/><circle cx="101.500" cy="703.500" r="5.500" fill="#f4d8d8" stroke="#4a3a6a" stroke-width="1.300"/><circle cx="101.500" cy="703.500" r="3" fill="#a8d0f0" stroke="#3a6a9a" stroke-width="0.700"/><path d="M101.500 703.500 L104 700" stroke="#1a3a6a" stroke-width="1"/>
<path d="M118.500 697 L118.500 710 M133.500 697 L133.500 710" stroke="#2a2a2a" stroke-width="1.200"/><path d="M120 706.500 L132 706.500" stroke="#4a5a1a" stroke-width="1.300"/><path d="M119.500 706.500 L123 704.500 L123 708.500 Z M132.500 706.500 L129 704.500 L129 708.500 Z" fill="#4a5a1a"/><path d="M122 695 L125 701 M125 695 L122 701 M128 695 L131 701 M131 695 L128 701" stroke="#2a2a2a" stroke-width="1"/>
<rect x="141.500" y="697.500" width="15" height="10" fill="#f8f8e8" stroke="#5a5a3a" stroke-width="1"/><text x="149" y="706.300" font-family="Liberation Sans" font-weight="bold" font-size="10.500" fill="#3a3a1a" text-anchor="middle" textLength="13" lengthAdjust="spacingAndGlyphs">XYZ</text>
</svg>
<!-- option checkboxes -->
<div class="cb" style="left:12px;top:719px;width:12px;height:12px;border-color:#8a8a8a"></div>
<div class="t" style="letter-spacing:-1.57px;left:31px;top:718px;font-size:11.500px"><span class="k">ﾊﾟﾀｰﾝ</span>を作成</div>
<div class="cb" style="left:12px;top:740px;width:12px;height:12px;border-color:#8a8a8a"></div>
<div class="t" style="letter-spacing:-0.60px;left:31px;top:739px;font-size:11px">方向を維持</div>
<div class="cb" style="left:12px;top:760px;width:12px;height:12px;border-color:#8a8a8a"></div>
<div class="t" style="letter-spacing:-0.60px;left:31px;top:759px;font-size:11px">最初に分離</div>
<div class="cb" style="left:12px;top:781px;width:12px;height:12px;border-color:#2a5580;background:#2a5580"></div>
<svg style="left:13px;top:783px;width:10px;height:8px" viewBox="0 0 11 9"><path d="M1.500 4.500 L4.300 7.500 L9.500 1.500" fill="none" stroke="#fff" stroke-width="1.500"/></svg>
<div class="t" style="letter-spacing:-1.28px;left:31px;top:780px;font-size:11.500px"><span class="k">ｽｹｯﾁ</span>の接続を保持</div>
<div class="t" style="letter-spacing:-1.20px;left:12px;top:802px;font-size:11px;color:#8a8a8a">向きを記憶</div>
<svg style="left:70px;top:800px;width:15px;height:16px" viewBox="0 0 15 16"><path d="M3.500 1.500 L3.500 11 L9 7.500" fill="none" stroke="#4a4a4a" stroke-width="1.400"/><path d="M3.500 11 L13 14" stroke="#d02a2a" stroke-width="1.500"/></svg>
<div class="t" style="letter-spacing:-0.98px;left:89px;top:802px;font-size:11px"><span class="k">ﾃﾞｨﾌｫﾙﾄ</span></div>
<svg style="left:132px;top:806px;width:7px;height:5px" viewBox="0 0 7 5"><path d="M0 0.500 L7 0.500 L3.500 4.500 Z" fill="#222"/></svg>
<!-- bottom tabs -->
<div class="a" style="left:2px;top:960px;width:236px;height:25px;background:#f7f7fb"></div>
<div class="a" style="left:6px;top:960px;width:84px;height:22px;background:#efeff3;border-left:1px solid #2d5c88;border-right:1px solid #2d5c88"></div>
<div class="t" style="letter-spacing:-0.67px;left:12px;top:963px;color:#2d5c88"><span class="k">ｵﾌﾟｼｮﾝ</span> - 移動</div>
<div class="t" style="left:96px;top:963px;width:24px">選択</div>
<!--LEFT-CONTENT-->
<!-- VIEWPORT -->
<div class="a" style="left:244px;top:149px;width:988px;height:808px;background:#fff;border:1px solid #a9a48e;box-shadow:inset 0 0 0 1px #e4e0d0"></div>
<div class="t" style="letter-spacing:-0.85px;left:257px;top:156px;font-size:13.500px;line-height:18px;color:#5a5a5a">選択された<span class="k">ﾊﾝﾄﾞﾙ</span>に沿ってそこまで移動するための基準を選択します</div>
<!-- tool guide buttons -->
<div class="vbtn" style="left:261px;top:181px"></div>
<div class="vbtn" style="left:324px;top:181px"></div>
<div class="vbtn" style="left:387px;top:181px"></div>
<div class="vbtn" style="left:450px;top:181px"></div>
<div class="vbtn" style="left:261px;top:221px"></div>
<div class="vbtn" style="left:324px;top:221px"></div>
<div class="vbtn" style="left:387px;top:221px"></div>
<div class="vbtn" style="left:513px;top:237px"></div>
<div class="a" style="left:512px;top:183px;width:48px;height:48px;border:1.500px solid #6e6e6e;border-radius:9px;background:#fff"></div>
<svg style="left:261px;top:181px;width:31px;height:31px" viewBox="0 0 31 31"><path d="M10 6 L10 22 L14 18.500 L17.500 25.500 L20.500 24 L17 17.500 L22.500 17 Z" fill="#5a5a5a" stroke="#2a2a2a" stroke-width="0.900" stroke-linejoin="round"/><path d="M11 8.500 L11 15 L15 12 Z" fill="#b8b0a8" opacity="0.800"/></svg>
<svg style="left:324px;top:181px;width:31px;height:31px" viewBox="0 0 31 31"><path d="M4 26 L6 28 L19.500 14.500 L22 17 L28 4 L15 10 L17.500 12.500 Z" fill="#b8e4f4" stroke="#2a6a9a" stroke-width="1" stroke-linejoin="round"/></svg>
<svg style="left:387px;top:181px;width:31px;height:31px" viewBox="0 0 31 31"><path d="M3 26.500 Q7 21 12 23 Q18 25 20.500 16.500 L23 17.500 L28 5 L16 12.500 L18.500 14 Q16.500 21.500 12 20.500 Q6 19 2.500 24.500 Z" fill="#b8e4f4" stroke="#2a6a9a" stroke-width="1" stroke-linejoin="round"/></svg>
<svg style="left:450px;top:181px;width:31px;height:31px" viewBox="0 0 31 31"><path d="M11 15 L7 26.500 L16.500 29 L23 25 L18 15 Z" fill="#a8e4e0" stroke="#3a9a98" stroke-width="0.900" stroke-linejoin="round"/><path d="M16 16 L16.500 29" stroke="#3a9a98" stroke-width="0.700"/><path d="M3 9 L8 5 L28 10.500 L28 16 L24 19.500 L3 14 Z" fill="#e8b888" stroke="#8a5a2a" stroke-width="0.900" stroke-linejoin="round"/><path d="M3 9 L24 14 L28 10.500 M24 14 L24 19.500" fill="none" stroke="#8a5a2a" stroke-width="0.700"/><path d="M3 9 L8 5 L28 10.500 L24 14 Z" fill="#d89a60"/></svg>
<svg style="left:261px;top:221px;width:31px;height:31px" viewBox="0 0 31 31"><path d="M5 4 L5 17 L8.500 14 L11.500 20 L14 18.800 L11 13.500 L15.500 13 Z" fill="#5a5a5a" stroke="#2a2a2a" stroke-width="0.800" stroke-linejoin="round"/><path d="M13.500 15.500 L18 12.500 L26.500 13.500 L26.500 24.500 L22 27.500 L13.500 26.500 Z M13.500 15.500 L22 16.500 L26.500 13.500 M22 16.500 L22 27.500 M18 12.500 L18 23.500 L13.500 26.500 M18 23.500 L26.500 24.500" fill="none" stroke="#e82a2a" stroke-width="0.900" stroke-dasharray="2 1"/><path d="M15.500 17.500 L21 18 L21 26 L15.500 25.500 Z" fill="#e8b888" stroke="#a86a3a" stroke-width="0.600"/><path d="M21 18 L24.500 15.500 L24.500 23.500 L21 26 Z" fill="#d09868"/></svg>
<svg style="left:324px;top:221px;width:31px;height:31px" viewBox="0 0 31 31"><path d="M8 20 L13 10" stroke="#5ab07a" stroke-width="1.400" stroke-dasharray="3 1.500"/><path d="M14.500 3 L9.500 11 L14.500 12.500 Z" fill="#b0eac0" stroke="#2a8a4a" stroke-width="0.900"/><path d="M10 23 L19 26" stroke="#d86a6a" stroke-width="1.400" stroke-dasharray="3 1.500"/><path d="M28 29 L19.500 23 L17.500 28.500 Z" fill="#f4b4b4" stroke="#c84a4a" stroke-width="0.900"/><circle cx="7.500" cy="21.500" r="4" fill="#f0e83a" stroke="#9a8a0a" stroke-width="0.900"/></svg>
<svg style="left:387px;top:221px;width:31px;height:31px" viewBox="0 0 31 31"><g fill="#b8e4f4" stroke="#2a6a9a" stroke-width="0.900" stroke-linejoin="round"><path d="M15.500 4 L12.500 11 L14.700 11 L14.700 17 L16.300 17 L16.300 11 L18.500 11 Z"/><path d="M3 26 L10.500 25 L9.200 23.200 L14 19.800 L13 18.500 L8.200 21.800 L7 20 Z"/><path d="M28 26 L20.500 25 L21.800 23.200 L17 19.800 L18 18.500 L22.800 21.800 L24 20 Z"/></g></svg>
<svg style="left:512px;top:183px;width:48px;height:48px" viewBox="0 0 48 48"><defs><linearGradient id="og" x1="0" y1="0" x2="1" y2="1"><stop offset="0" stop-color="#f09a4a"/><stop offset="1" stop-color="#c8641a"/></linearGradient><linearGradient id="ag" x1="0" y1="0" x2="1" y2="1"><stop offset="0" stop-color="#5a8a3a"/><stop offset="0.500" stop-color="#e8d080"/><stop offset="1" stop-color="#4a8a4a"/></linearGradient></defs><path d="M24.500 21 L32 17 L43.500 20.500 L43.500 37 L35.500 41.500 L24.500 37.500 Z" fill="url(#og)" stroke="#8a4a1a" stroke-width="1" stroke-linejoin="round"/><path d="M24.500 21 L32 17 L43.500 20.500 L36 24.500 Z" fill="#f4a45a"/><path d="M36 24.500 L43.500 20.500 L43.500 37 L35.500 41.500 Z" fill="#c4641a"/><path d="M24.500 21 L36 24.500 L43.500 20.500 M36 24.500 L35.500 41.500" fill="none" stroke="#8a4a1a" stroke-width="0.800"/><path d="M31 30 L26 27 M31 30 L27 34 M31 30 L31 35.500 M31 30 L35 33 M31 30 L34.500 27 M31 30 L30 25" stroke="#3a8a3a" stroke-width="1.300"/><path d="M5 6 L8 4 L15.500 11 L19 8.500 L30 29 L9 18.500 L12.500 14.500 Z" fill="url(#ag)" stroke="#1a4a1a" stroke-width="1.300" stroke-linejoin="round"/></svg>
<svg style="left:513px;top:237px;width:31px;height:31px" viewBox="0 0 31 31"><path d="M12 5.500 L23.500 2.500 L26 11 L15 15 Z" fill="#e8c4a0" stroke="#c89868" stroke-width="0.900"/><path d="M6 21 L22 26.500 L14 27.500 Z" fill="#f0f6fc" stroke="#b8d0e8" stroke-width="0.900"/><path d="M20 11.500 L17.500 19 L19.500 19 L21.500 28 L23.500 27.500 L22.500 19 L24.500 18.500 Z" fill="#c8e8f8" stroke="#3a8ac8" stroke-width="0.900" stroke-linejoin="round"/><circle cx="18.500" cy="8.500" r="2" fill="#e8f4fc" stroke="#6aa8d8" stroke-width="0.800"/></svg>
<svg style="left:245px;top:150px;width:986px;height:806px" viewBox="245 150 986 806">
<!-- orange solid -->
<path d="M673.500 841 L673.500 548.400 L707 518.800 L729 558 L749 541.300 L741 489.800 L775.400 460.600 L833.600 477.100 L871.800 548.500 L906.400 556.700 L892.600 494.200 L950.800 511.100 L950.800 801.700 L849.300 891.200 Z" fill="#ff7601"/>
<path d="M849.300 598.400 L882.800 570.300 L874.600 635.600 L925.600 590.900 L916.600 539.600 L950.800 511.100 L950.800 801.700 L849.300 891.200 Z" fill="#f26c01"/>
<g fill="none" stroke="#5a2a00" stroke-width="0.900" stroke-linejoin="round">
<path d="M673.500 622 L673.500 841 L849.300 891.200 L950.800 801.700 L950.800 511.100 L892.600 494.200 L906.400 556.700 L871.800 548.500"/>
<path d="M857.300 522.200 L882.800 570.300 L874.600 635.600 L925.600 590.900 L916.600 539.600 L892.600 494.200"/>
<path d="M916.600 539.600 L950.800 511.100 M906.400 556.700 L925.600 590.900"/>
<path d="M790.300 582.200 L849.300 598.400 L882.800 570.300 M849.300 598.400 L849.300 891.200"/>
<path d="M790.300 582.200 L804.500 644.700 L797.400 630.800 M804.500 644.700 L767.500 634.500"/>
</g>
<!-- gray solid -->
<path d="M599.500 308 L701.600 220 L877.200 271.200 L877.100 506.400 L790 581 L797.400 630.800 L731.500 639 L644 614.100 L653.300 575.300 L658.800 559.500 L599.500 542.800 Z" fill="#d2d2d2"/>
<path d="M775.400 358.800 L877.200 271.200 L877.100 506.400 L775.300 592.800 Z" fill="#9c9c9c"/>
<path d="M628.800 551.500 L658.800 559.500 L654.100 575.300 L625.100 579.200 Z" fill="#e2e2e2"/>
<!-- overlap tints -->
<path d="M673.500 548.400 L707 518.800 L729 558 L749 541.300 L741 489.800 L775.400 460.600 L775.300 592.800 L717.200 576.600 L731.500 639 L673.500 622.500 Z" fill="#e4a97e"/>
<path d="M775.400 460.600 L833.600 477.100 L857.300 522.200 L775.300 592.800 Z" fill="#c4885e"/>
<path d="M717.200 576.600 L775.300 592.800 L790 581 L797.400 630.800 L731.500 639 Z" fill="#eeb48a"/>
<!-- hidden thin lines -->
<g fill="none" stroke="#8a7a6a" stroke-width="0.700" opacity="0.750">
<path d="M673.500 548.400 L731.600 565 L729 558 M731.600 565 L717.200 618.900 L760.300 632.300"/>
<path d="M741 489.800 L790 581 M749 541.300 L775.400 593 L797.200 629.500"/>
<path d="M673.500 548.400 L707 518.800 L729 558 L749 541.300 L741 489.800 L775.400 460.600 L833.600 477.100 L857.300 522.200"/>
<path d="M673.500 548.400 L673.500 622"/>
</g>
<!-- gray edges -->
<g fill="none" stroke="#2e2e2e" stroke-width="0.900" stroke-linejoin="round">
<path d="M599.500 308 L701.600 220 L877.200 271.200 L877.100 506.400 L775.300 592.800 L717.200 576.600 L731.500 639 L644 614.100 L653.300 575.300 L658.800 559.500 L599.500 542.800 Z"/>
<path d="M599.500 308 L775.400 358.800 L877.200 271.200 M775.400 358.800 L775.300 592.800"/>
<path d="M628.800 551.500 L625.100 579.200 L654.100 575.300"/>
<path d="M731.500 639 L797.400 630.800"/>
</g>
<!-- move gizmo -->
<path d="M712 762.500 L679 791" stroke="#c4845c" stroke-width="1.300"/>
<path d="M765 669 Q806 684 813.200 729" fill="none" stroke="#acace0" stroke-width="3.600" stroke-linecap="round"/>
<path d="M757.800 670.600 Q734 694 731 738" fill="none" stroke="#d4b0bc" stroke-width="3.600" stroke-linecap="round"/>
<path d="M736.500 746.600 Q772 758 810.800 737.900" fill="none" stroke="#a4d0a8" stroke-width="4" stroke-linecap="round"/>
<path d="M759 714 L759 654 L764 654 L764 714 Z" fill="#a4cca6"/>
<path d="M761.500 632.500 L755.800 652 L757 657 L766 657 L767.200 652 Z" fill="#acd4ae" stroke="#8ab890" stroke-width="0.600"/>
<path d="M766 718 L825.500 734.500 L824 741.500 L764.500 725.200 Z" fill="#dcb0a8"/>
<path d="M848.800 745 L826.500 732.500 L823.500 744.500 Z" fill="#e4b8b0" stroke="#d0a498" stroke-width="0.500"/>
<path d="M752 716 L762 712.500 L771 715.500 L771 728 L762 732 L752 728.500 Z" fill="#4444d4"/>
<path d="M752 716 L762 712.500 L771 715.500 L761.500 719 Z" fill="#5a5ae0"/>
<path d="M756 721.500 L729.500 743.500 L733.500 749 L760 728 Z" fill="#1414f0"/>
<path d="M710.300 764 L725.500 743.500 L729 741.500 L735 748.500 L734 752 Z" fill="#1a1af4"/>
<!-- mini toolbar -->
<rect x="722.500" y="687.500" width="99" height="24.500" fill="#fffffd" stroke="#e4dccc" stroke-width="1"/>
<rect x="772.500" y="689" width="23.500" height="22" rx="3" fill="#c9c9c9"/>
<path d="M728 709 L734 701.500 L744 701.500 L738 709 Z" fill="#fafafa" stroke="#a0a0a0" stroke-width="0.800"/><path d="M733 706 L736.500 692.500 L739 703 M734.500 701 L739 701" fill="none" stroke="#a8a8a8" stroke-width="1"/>
<path d="M752.500 697 L752.500 709.500 M767.500 697 L767.500 709.500" stroke="#2a2a2a" stroke-width="1.100"/><path d="M754 706 L766 706" stroke="#4a5a1a" stroke-width="1.300"/><path d="M753 706 L757 703.800 L757 708.200 Z M767 706 L763 703.800 L763 708.200 Z" fill="#4a5a1a"/><path d="M756 693 L759 699 M759 693 L756 699 M761.500 693 L764.500 699 M764.500 693 L761.500 699" stroke="#2a2a2a" stroke-width="1"/>
<path d="M780 696 L785.500 692.500 L792 696.500 L786.500 700 Z" fill="#f4d0b0" stroke="#a86a3a" stroke-width="0.900"/><path d="M776 708 L784 699" stroke="#2a8ac8" stroke-width="2.400"/><path d="M786 696.500 L780.500 699 L784.500 702.500 Z" fill="#8ad0f0" stroke="#2a6a9a" stroke-width="0.600"/>
<rect x="800.500" y="694.500" width="14.500" height="10" fill="#fcfcec" stroke="#5a5a3a" stroke-width="1"/><text x="807.800" y="703.300" font-family="Liberation Sans" font-weight="bold" font-size="10.500" fill="#3a3a1a" text-anchor="middle" textLength="12.500" lengthAdjust="spacingAndGlyphs">XYZ</text>
<!-- cursor -->
<path d="M782.500 702 L782.500 717 L786 713.800 L788.600 719.800 L791 718.800 L788.500 713 L793 713 Z" fill="#fff" stroke="#111" stroke-width="1" stroke-linejoin="round"/>
<!-- origin triad -->
<path d="M738.300 816.900 L738.300 788" stroke="#8a789c" stroke-width="2.200"/><path d="M738.300 776 L735 791 L741.600 791 Z" fill="#4a80f4"/>
<path d="M738.300 816.900 L755 803" stroke="#5a7a14" stroke-width="2.400"/><path d="M763.500 796 L751.500 800.500 L756.500 806.800 Z" fill="#1a8a1a"/>
<path d="M738.300 816.900 L768 825.500" stroke="#f4380a" stroke-width="2.400"/><path d="M780 829 L766 821.500 L764.200 829.200 Z" fill="#ff1a0a"/>
<circle cx="738.300" cy="816.900" r="1.600" fill="#9a8a8a"/>
<text x="738.300" y="769.500" font-family="Liberation Sans" font-weight="bold" font-size="11.500" fill="#6c3494" text-anchor="middle">Z</text>
<text x="768.600" y="795.500" font-family="Liberation Sans" font-weight="bold" font-size="11.500" fill="#7c9218" text-anchor="middle">Y</text>
<text x="790" y="836.500" font-family="Liberation Sans" font-weight="bold" font-size="11.500" fill="#ff3410" text-anchor="middle">X</text>
</svg>
<!--SCENE-->
<!-- view cube -->
<svg style="left:280px;top:850px;width:75px;height:70px" viewBox="280 850 75 70">
<text x="303.500" y="862" font-family="Liberation Sans" font-weight="bold" font-size="11" fill="#2222dd" text-anchor="middle">Z</text>
<path d="M303.400 866.500 L300.400 878 L306.400 878 Z" fill="#1a1ae8"/><path d="M303.400 877 L303.400 883" stroke="#1a1ae8" stroke-width="1.400"/>
<path d="M289 891.800 L300.500 884 L316.700 888.200 L307.200 896.200 Z" fill="#e8f0fc" stroke="#b0bcd4" stroke-width="0.600"/>
<path d="M289 891.800 L307.200 896.200 L307 913.900 L290.400 908 Z" fill="#dce8f8" stroke="#b0bcd4" stroke-width="0.600"/>
<path d="M307.200 896.200 L316.700 888.200 L316 905 L307 913.900 Z" fill="#b8c6e2" stroke="#a0acc8" stroke-width="0.600"/>
<path d="M299.800 890.500 Q300 885.800 303.500 885.800 Q307 885.800 307.200 890.500 Q303.500 892.500 299.800 890.500 Z" fill="#1a1ae8"/>
<circle cx="298" cy="903" r="4" fill="#1a9a22"/>
<ellipse cx="313" cy="901" rx="2.900" ry="4" fill="#f41a1a" transform="rotate(12 313 901)"/>
<text x="318.500" y="889.500" font-family="Liberation Sans" font-weight="bold" font-size="11" fill="#2a7a1a" text-anchor="middle">Y</text>
<path d="M319 903 L327 905.300" stroke="#f41a1a" stroke-width="1.400"/><path d="M334.600 907.400 L324.500 907.600 L326 901.800 Z" fill="#f41a1a"/>
<text x="342.600" y="914" font-family="Liberation Sans" font-weight="bold" font-size="11" fill="#f02a2a" text-anchor="middle">X</text>
</svg>
<!-- scale bar -->
<div class="a" style="left:1151px;top:928px;width:68px;height:2px;background:#2a2ad0"></div>
<div class="t" style="left:1165px;top:931px;width:40px;text-align:center;color:#2a2ad0;font-size:11px">20mm</div>
<!--VIEW-CONTENT-->
<!-- RIGHT STRIP -->
<!-- right strip -->
<div class="a" style="left:1235px;top:146px;width:27px;height:839px;background:#f0f0f0"></div>
<div class="a" style="left:1235px;top:146px;width:27px;height:28px;background:#f5f5f9"></div>
<div class="a" style="left:1255px;top:149px;width:6px;height:61px;background:#c9c9c9"></div>
<div class="t" style="left:1249px;top:155px;transform-origin:0 0;transform:rotate(90deg) translate(0,-7px);font-size:11px;letter-spacing:-0.6px"><span class="k">ｸｲｯｸｶﾞｲﾄﾞ</span></div>
<!-- doc tab row -->
<div class="a" style="left:241px;top:960px;width:994px;height:25px;background:#f6f6fb"></div>
<div class="a" style="left:241px;top:960px;width:994px;height:1px;background:#6e6e6e"></div>
<div class="a" style="left:241px;top:960px;width:1px;height:25px;background:#5a5a5a"></div>
<div class="a" style="left:245px;top:961px;width:72px;height:21px;background:#f4f4fa;border:1px solid #2d5c88;border-top:none;border-bottom-width:2px"></div>
<svg style="left:250px;top:962px;width:15px;height:16px" viewBox="0 0 16 17"><path d="M1.500 1 L8 1 L11.500 4.500 L11.500 14 L1.500 14 Z" fill="#fdfdff" stroke="#6a7aa8" stroke-width="1"/><path d="M8 1 L8 4.500 L11.500 4.500" fill="none" stroke="#6a7aa8" stroke-width="0.900"/><path d="M3 10.500 L9 8.500 L14.500 10.500 L14.500 13 L8.500 15.500 L3 13 Z" fill="#f4c890" stroke="#7a4a1a" stroke-width="0.900" stroke-linejoin="round"/><path d="M3 10.500 L8.500 12.500 L14.500 10.500 M8.500 12.500 L8.500 15.500" fill="none" stroke="#7a4a1a" stroke-width="0.700"/></svg>
<div class="t" style="letter-spacing:0.05px;left:268px;top:964px;font-weight:bold;color:#2d5c88;font-size:12px">test1*</div>
<svg style="left:304px;top:967px;width:8px;height:8px" viewBox="0 0 8 8"><path d="M0.800 0.800 L7.200 7.200 M7.200 0.800 L0.800 7.200" stroke="#5a5a5a" stroke-width="1.500"/></svg>
<svg style="left:1195px;top:965px;width:7px;height:11px" viewBox="0 0 7 11"><path d="M6 1 L6 10 L1 5.500 Z" fill="none" stroke="#3a3a3a" stroke-width="1"/></svg>
<svg style="left:1209px;top:965px;width:7px;height:11px" viewBox="0 0 7 11"><path d="M1 1 L1 10 L6 5.500 Z" fill="none" stroke="#3a3a3a" stroke-width="1"/></svg>
<svg style="left:1223px;top:966px;width:9px;height:9px" viewBox="0 0 9 9"><path d="M0.800 0.800 L8.200 8.200 M8.200 0.800 L0.800 8.200" stroke="#3a3a3a" stroke-width="1.300"/></svg>
<!--RIGHT-CONTENT-->
<!-- DOC TABS -->
<!--DOCTAB-CONTENT-->
<!-- STATUS BAR -->
<div class="a" style="left:0;top:985px;width:1264px;height:32px;background:#2d5c88"></div>
<div class="t" style="letter-spacing:-1.73px;left:10px;top:995px;color:#fff;font-size:11px">選択された<span class="k">ﾊﾝﾄﾞﾙ</span>に沿ってそこまで移動するための基準を選択します</div>
<div class="a" style="left:523px;top:990px;width:1px;height:25px;background:#5f84a8"></div>
<div class="a" style="left:674px;top:990px;width:1px;height:25px;background:#5f84a8"></div>
<div class="a" style="left:738px;top:990px;width:1px;height:25px;background:#5f84a8"></div>
<div class="a" style="left:839px;top:990px;width:1px;height:25px;background:#5f84a8"></div>
<svg style="left:708px;top:995px;width:14px;height:14px" viewBox="0 0 14 14"><circle cx="7" cy="7" r="6.500" fill="#e03030"/><path d="M7 2.800 L7 8.200" stroke="#fff" stroke-width="2" stroke-linecap="round"/><circle cx="7" cy="10.800" r="1.200" fill="#fff"/></svg>
<svg style="left:726px;top:999px;width:8px;height:5px" viewBox="0 0 8 5"><path id="upa" d="M0.500 4.500 L4 0.500 L7.500 4.500 Z" fill="#fff"/></svg>
<div class="t" style="letter-spacing:-0.30px;left:896px;top:995px;color:#fff;font-size:11px">1<span class="k">ﾎﾞﾃﾞｨ</span></div>
<svg style="left:990px;top:990px;width:260px;height:24px" viewBox="990 990 260 24">
<path d="M992 999.300 L997 994 L1002 999.300 Z M992 1005 L997 1010.300 L1002 1005 Z" fill="#6a87a4"/>
<path d="M1011 995 L1011 1007.500 L1014 1005 L1016 1009.500 L1018 1008.500 L1016 1004.300 L1019.500 1004 Z" fill="#fff" stroke="#1a1a1a" stroke-width="0.800" stroke-linejoin="round"/>
<path d="M1019 998.500 Q1021 994 1024 996.500 Q1027 1000 1022 1005" fill="none" stroke="#6ab4f4" stroke-width="1.800"/><path d="M1018 994.500 L1018.500 999.500 L1023 998 Z" fill="#6ab4f4"/>
<path d="M1038 995 L1038 1007.500 L1041 1005 L1043 1009.500 L1045 1008.500 L1043 1004.300 L1046.500 1004 Z" fill="#fff" stroke="#1a1a1a" stroke-width="0.800" stroke-linejoin="round"/>
<path d="M1053.500 1004 L1057 1000 L1060.500 1004 Z" fill="#fff"/>
<rect x="1070" y="996.500" width="14" height="11" fill="none" stroke="#6ab4f4" stroke-width="1.800" stroke-dasharray="4 2.500"/>
<path d="M1088.500 1004 L1092 1000 L1095.500 1004 Z" fill="#fff"/>
<path d="M1100.500 990 L1100.500 1014" stroke="#7f9bb8" stroke-width="1"/>
<g transform="translate(1104.500 993.500)"><g fill="#6ab4f4" stroke="none"><path d="M0.400 9.300 L4.600 5.200 L4.900 11.200 Z"/><path d="M16.600 10 L12.300 5.800 L12 11.800 Z"/><path d="M6.200 0.600 L11.400 2.700 L6 5.200 Z"/><path d="M5.500 16.500 L4.700 11.600 L10.300 13.400 Z"/></g><path d="M4 8 Q8.500 5.800 13 8.600" fill="none" stroke="#6ab4f4" stroke-width="2.300"/><path d="M8 3.500 Q10.800 8.500 7.300 13.500" fill="none" stroke="#6ab4f4" stroke-width="2.300"/></g>
<path d="M1124.500 1004 L1128 1000 L1131.500 1004 Z" fill="#fff"/>
<g transform="translate(1139.500 993.500)"><path d="M8.500 3 L8.500 14 M3 8.500 L14 8.500" stroke="#6ab4f4" stroke-width="2"/><g fill="#6ab4f4"><path d="M8.500 0.300 L11.900 4.100 L5.100 4.100 Z"/><path d="M8.500 16.700 L11.900 12.900 L5.100 12.900 Z"/><path d="M0.300 8.500 L4.100 5.100 L4.100 11.900 Z"/><path d="M16.700 8.500 L12.900 5.100 L12.900 11.900 Z"/></g></g>
<circle cx="1170.500" cy="1000.500" r="5.300" fill="#fff" stroke="#6ab4f4" stroke-width="2"/><path d="M1174.500 1004.500 L1179 1009" stroke="#6ab4f4" stroke-width="2.800" stroke-linecap="round"/>
<path d="M1183.500 1004 L1187 1000 L1190.500 1004 Z" fill="#fff"/>
<path d="M1214 998 L1205 1002.500" stroke="#6ab4f4" stroke-width="3.800"/><path d="M1198.800 1005.800 L1203.300 997.900 L1207.700 1006.400 Z" fill="#6ab4f4"/>
<path d="M1224 1005.400 L1233 1001" stroke="#6ab4f4" stroke-width="3.800"/><path d="M1239.200 997.600 L1234.700 1005.500 L1230.300 997 Z" fill="#6ab4f4"/>
</svg>
<!--STATUS-CONTENT-->
</body>
</html>
